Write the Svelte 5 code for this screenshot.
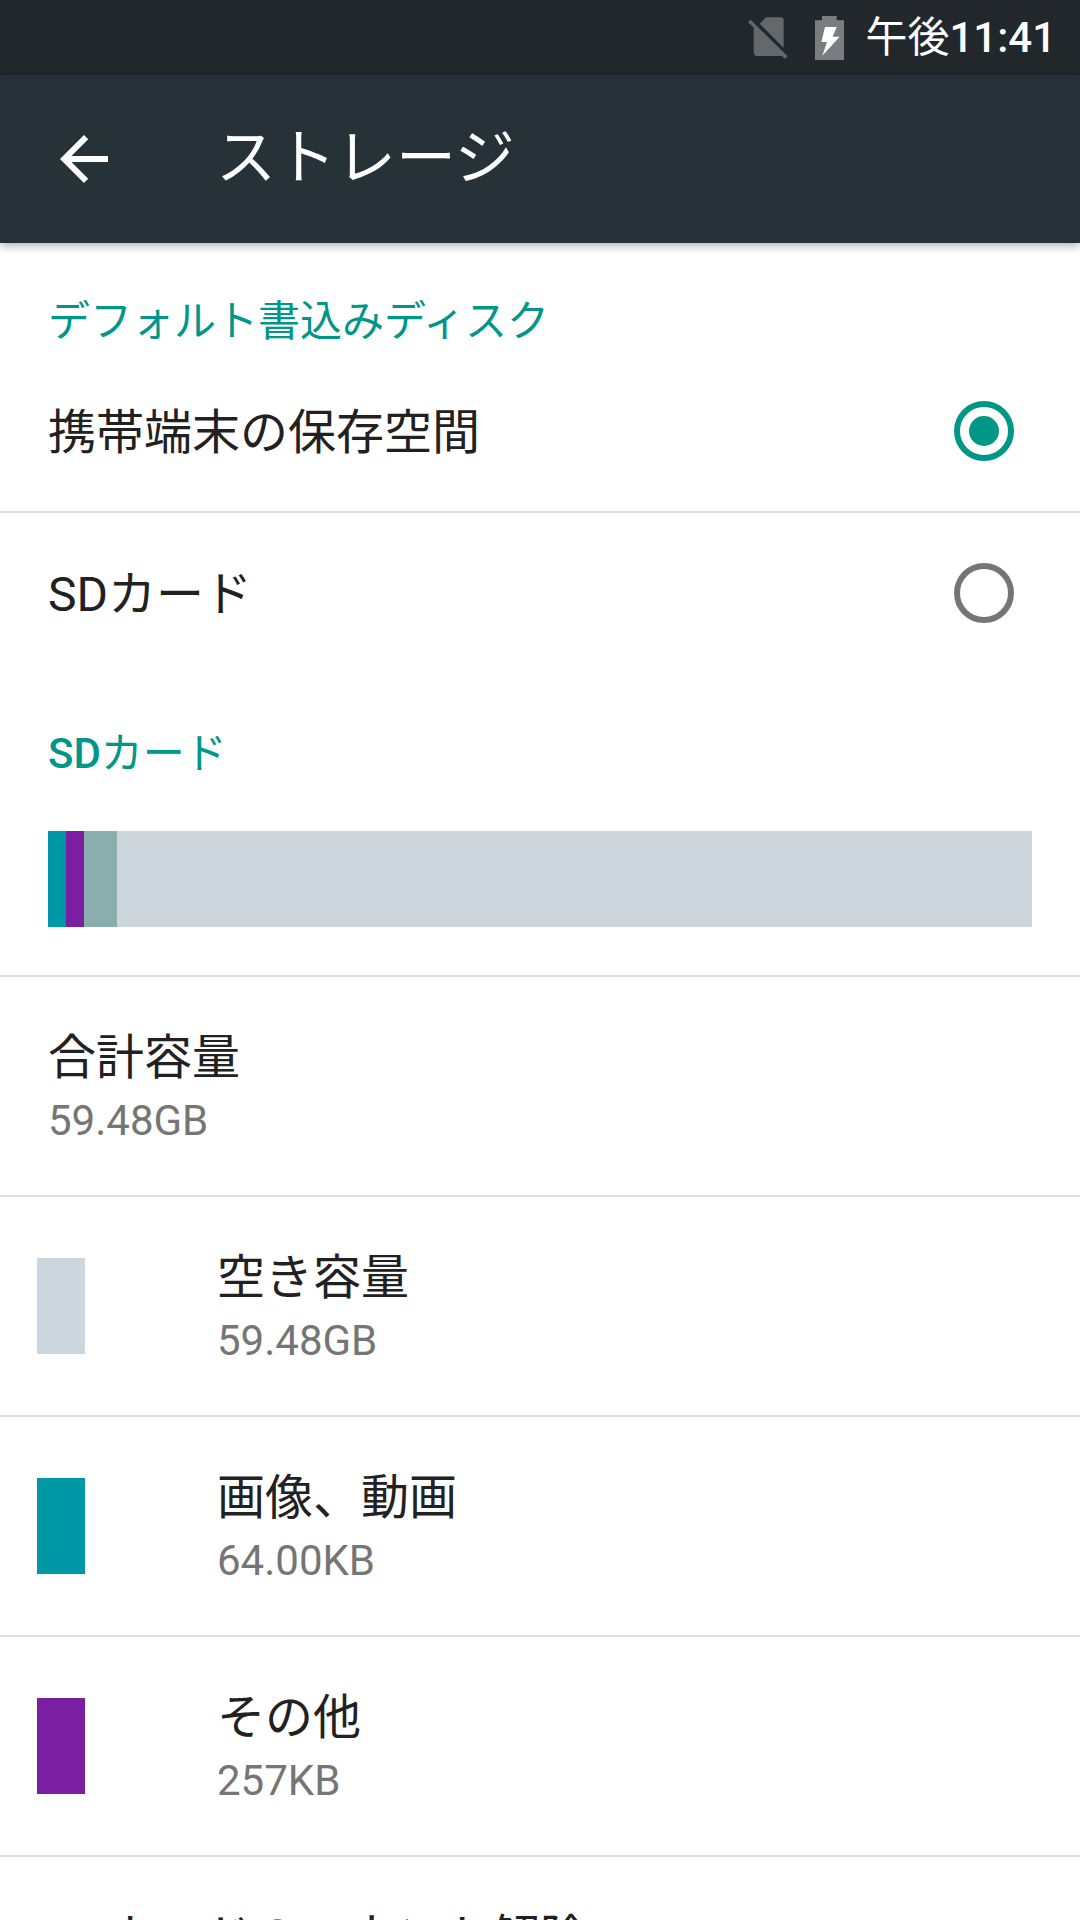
<script>
    let target = $state('internal');

    const disks = [
        { id: 'internal', label: '携帯端末の保存空間' },
        { id: 'sdcard', label: 'SDカード' }
    ];

    const usage = [
        { color: '#0097a7', share: 1.83 },
        { color: '#7b1fa2', share: 1.83 },
        { color: '#8aadae', share: 3.35 }
    ];

    const entries = [
        { title: '合計容量', size: '59.48GB' },
        { title: '空き容量', size: '59.48GB', color: '#ced6dd' },
        { title: '画像、動画', size: '64.00KB', color: '#0097a7' },
        { title: 'その他', size: '257KB', color: '#7b1fa2' }
    ];
</script>

<div class="screen">
    <div class="status">
        <svg class="sim" viewBox="0 0 120 132" aria-hidden="true">
            <path d="M35 23L54 4H97Q107 4 107 14V96Z" />
            <path d="M8 11L119 121L111 129L102 120H28Q17 120 17 109V35L0 18Z" />
        </svg>
        <svg class="battery" viewBox="0 0 87 132" aria-hidden="true">
            <path class="case" d="M21 0H65V13H87V132H0V13H21Z" />
            <path class="bolt" d="M30 33H65L53 62H74L22 119L36 78H19Z" />
        </svg>
        <span class="time">午後<b>11:41</b></span>
    </div>

    <header class="appbar">
        <button class="back" aria-label="戻る">
            <svg viewBox="0 0 24 24" aria-hidden="true">
                <path d="M20 11H7.83l5.59-5.59L12 4l-8 8 8 8 1.41-1.41L7.83 13H20v-2z" />
            </svg>
        </button>
        <h1>ストレージ</h1>
    </header>

    <main>
        <section>
            <h2>デフォルト書込みディスク</h2>
            {#each disks as disk}
                <label class="row disk">
                    <span class="title">{disk.label}</span>
                    <input type="radio" name="disk" value={disk.id} bind:group={target} />
                </label>
            {/each}
        </section>

        <section>
            <h2><b>SD</b>カード</h2>
            <div class="row chart">
                <div class="bar">
                    {#each usage as part}
                        <div style={`width: ${part.share}%; background: ${part.color};`}></div>
                    {/each}
                </div>
            </div>
            {#each entries as entry}
                <div class="row entry" class:indented={entry.color}>
                    {#if entry.color}
                        <div class="swatch" style={`background: ${entry.color};`}></div>
                    {/if}
                    <div class="text">
                        <div class="title">{entry.title}</div>
                        <div class="size">{entry.size}</div>
                    </div>
                </div>
            {/each}
            <button class="row unmount title">SDカードのマウント解除</button>
        </section>
    </main>
</div>

<style>
    :global(body) {
        margin: 0;
        background: #fff;
    }
    .screen {
        height: 100vh;
        display: flex;
        flex-direction: column;
        overflow: hidden;
        font-family: Roboto, "Noto Sans CJK JP", sans-serif;
        color: #212121;
    }
    b {
        font-weight: 500;
    }
    .status {
        flex: none;
        height: 75px;
        display: flex;
        align-items: center;
        justify-content: flex-end;
        padding-right: 24px;
        background: #22272b;
        color: #fff;
    }
    .sim {
        width: 40px;
        height: 44px;
        margin-right: 27px;
        fill: #64686b;
    }
    .battery {
        width: 29px;
        height: 44px;
        margin-right: 21px;
    }
    .case {
        fill: #7a7d80;
    }
    .bolt {
        fill: #fff;
    }
    .time {
        font-size: 42px;
        line-height: 48px;
    }
    .appbar {
        flex: none;
        height: 168px;
        display: flex;
        align-items: center;
        gap: 96px;
        padding: 0 48px;
        background: #263238;
        color: #fff;
        box-shadow: 0 3px 9px rgba(0, 0, 0, 0.3);
        z-index: 1;
    }
    .back {
        width: 72px;
        height: 72px;
        padding: 0;
        border: 0;
        background: none;
        cursor: pointer;
    }
    .back svg {
        display: block;
        fill: #fff;
    }
    h1 {
        margin: 0;
        font-size: 60px;
        line-height: 72px;
        font-weight: 400;
    }
    main {
        flex: 1;
        min-height: 0;
        overflow-y: auto;
        scrollbar-width: none;
    }
    h2 {
        margin: 0;
        padding: 50px 48px 0;
        font-size: 42px;
        line-height: 58px;
        font-weight: 400;
        color: #009688;
    }
    .row {
        display: flex;
        align-items: center;
        padding: 0 48px;
        border-bottom: 2px solid #e0e0e0;
    }
    .title {
        font-size: 48px;
        line-height: 64px;
    }
    .disk {
        height: 160px;
        justify-content: space-between;
        padding-right: 66px;
        cursor: pointer;
    }
    .disk:last-child {
        border-color: transparent;
    }
    .disk .title {
        padding-top: 4px;
    }
    input {
        appearance: none;
        box-sizing: border-box;
        width: 60px;
        height: 60px;
        margin: 0;
        border: 6px solid #757575;
        border-radius: 50%;
        display: grid;
        place-items: center;
    }
    input:checked {
        border-color: #009688;
    }
    input:checked::before {
        content: '';
        width: 30px;
        height: 30px;
        border-radius: 50%;
        background: #009688;
    }
    .chart {
        height: 192px;
    }
    .bar {
        flex: 1;
        height: 96px;
        display: flex;
        background: #ced6dd;
    }
    .entry {
        height: 218px;
    }
    .indented {
        padding-left: 37px;
    }
    .swatch {
        width: 48px;
        height: 96px;
        margin-right: 132px;
    }
    .text {
        padding-top: 6px;
    }
    .size {
        font-size: 42px;
        line-height: 62px;
        color: #757575;
    }
    .unmount {
        width: 100%;
        height: 160px;
        padding-top: 4px;
        border-width: 0 0 2px;
        background: none;
        color: inherit;
        font-family: inherit;
        text-align: left;
    }
</style>
